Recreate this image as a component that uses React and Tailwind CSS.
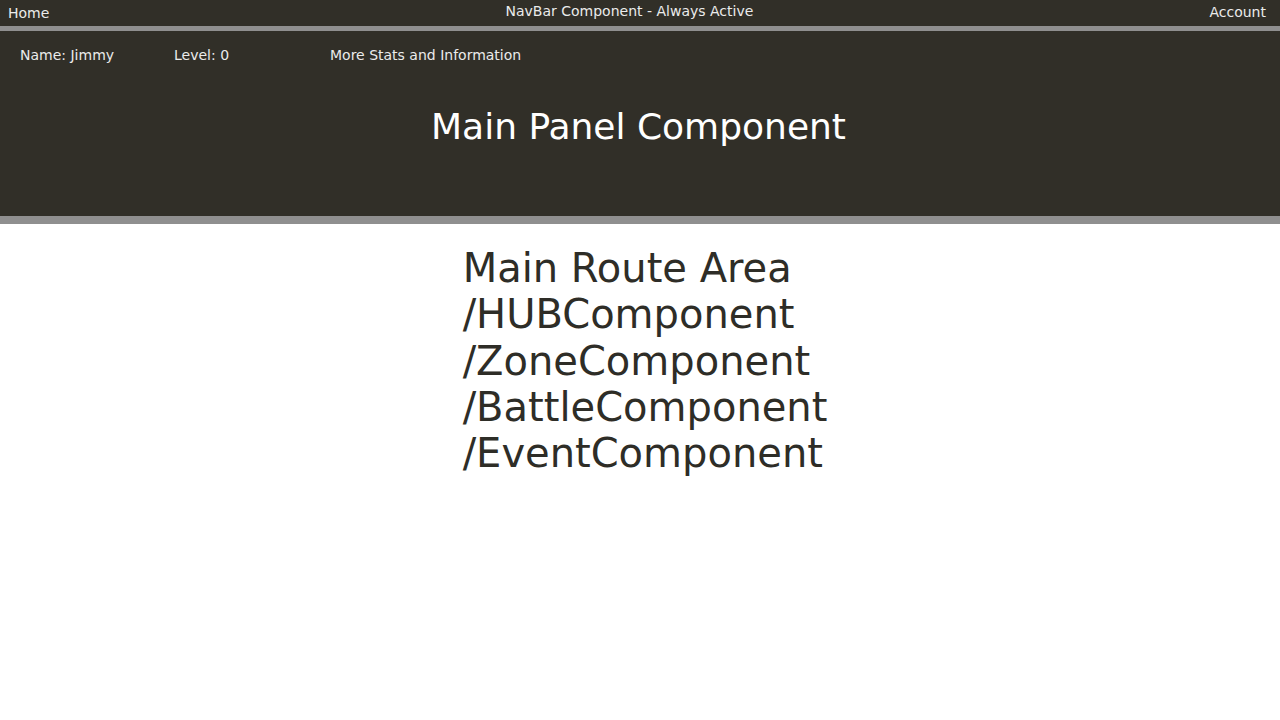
import React from 'react';

const routes = ["/HUBComponent", "/ZoneComponent", "/BattleComponent", "/EventComponent"];

const NavBar = () => (
  <div className="h-[26px] bg-[#312f28] text-[#ebebeb] text-[14px] flex items-start justify-between px-2 border-b-[5px] border-[#8f8f8f] box-content">
    <span className="pt-[4px] leading-[18px]">Home</span>
    <span className="pt-[2px] leading-[18px]">NavBar Component - Always Active</span>
    <span className="pt-[3px] leading-[18px] pr-[6px]">Account</span>
  </div>
);

const MainPanel = ({ name, level }) => (
  <div className="h-[185px] bg-[#312f28] text-[#ebebeb] border-b-[8px] border-[#8f8f8f] box-content">
    <div className="flex text-[14px] pl-5 pt-[15px] leading-[18px]">
      <span className="w-[154px]">Name: {name}</span>
      <span className="w-[156px]">Level: {level}</span>
      <span>More Stats and Information</span>
    </div>
    <h1 className="text-center text-[36px] text-white mt-[42px] leading-[42px] pr-[3px]">Main Panel Component</h1>
  </div>
);

const App = () => {
  return (
    <div className="min-h-screen bg-white" style={{ fontFamily: '"DejaVu Sans", sans-serif' }}>
      <NavBar />
      <MainPanel name="Jimmy" level={0} />
      <div className="flex justify-center pt-[21px] pl-[10px]">
        <div className="text-[40px] leading-[46.25px] text-[#2e2d27]">
          <div>Main Route Area</div>
          {routes.map(r => (
            <div key={r}>{r}</div>
          ))}
        </div>
      </div>
    </div>
  );
};

export default App;
